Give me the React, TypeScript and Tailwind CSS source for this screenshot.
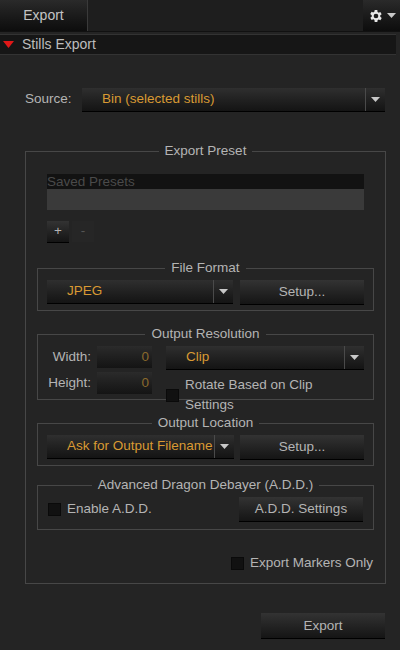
import React from 'react';

const font = { fontFamily: '"Liberation Sans", Arial, sans-serif' };

function Caret() {
  return (
    <svg width="9" height="5" viewBox="0 0 9 5">
      <path d="M0 0h9L4.5 5z" fill="#c8c8c8" />
    </svg>
  );
}

function Dropdown({ value, w, pad = 'pl-[20px]' }: { value: string; w: string; pad?: string }) {
  return (
    <div className={`flex h-[23px] ${w} bg-gradient-to-b from-[#2f2f2f] to-[#141414] shadow-[0_1px_0_#000]`}>
      <div className={`flex flex-1 items-center ${pad} text-[13.5px] text-[#d99a33] overflow-hidden whitespace-nowrap`}>{value}</div>
      <div className="flex w-[20px] items-center justify-center border-l border-[#4a4a4a]">
        <Caret />
      </div>
    </div>
  );
}

function Button({ label, w, h = 'h-[24px]' }: { label: string; w: string; h?: string }) {
  return (
    <div className={`flex ${h} ${w} items-center justify-center bg-gradient-to-b from-[#333] to-[#151515] text-[13.5px] text-[#b4b4b4] shadow-[0_1px_0_#000]`}>
      {label}
    </div>
  );
}

function Box() {
  return <div className="h-[13px] w-[13px] bg-[#111] border border-[#0a0a0a]" />;
}

function Group({ title, className, children }: { title: string; className?: string; children: React.ReactNode }) {
  return (
    <fieldset className={`border border-[#474747] ${className ?? ''}`}>
      <legend className="mx-auto px-[6px] text-[13.5px] leading-[14px] text-[#b4b4b4]">{title}</legend>
      {children}
    </fieldset>
  );
}

export default function App() {
  return (
    <div style={font} className="h-[650px] w-[400px] bg-[#242424] text-[#b4b4b4] text-[13.5px] overflow-hidden">
      {/* Top bar */}
      <div className="flex h-[32px] justify-between bg-[#1e1e1e] border-b border-[#111]">
        <div className="flex w-[88px] items-center justify-center bg-gradient-to-b from-[#2a2a2a] to-[#0d0d0d] border-r border-[#3a3a3a] text-[14px] text-[#c4c4c4]">
          Export
        </div>
        <div className="flex w-[37px] items-center justify-center gap-[3px] bg-gradient-to-b from-[#2a2a2a] to-[#0d0d0d]">
          <svg width="16" height="16" viewBox="0 0 24 24" fill="#e6e6e6">
            <path d="M19.4 13a7.5 7.5 0 000-2l2.1-1.6-2-3.4-2.5 1a7.4 7.4 0 00-1.7-1L15 3h-4l-.4 2.7a7.4 7.4 0 00-1.7 1l-2.5-1-2 3.4L6.6 11a7.5 7.5 0 000 2l-2.1 1.6 2 3.4 2.5-1a7.4 7.4 0 001.7 1L11 21h4l.4-2.7a7.4 7.4 0 001.7-1l2.5 1 2-3.4zM13 15.5a3.5 3.5 0 110-7 3.5 3.5 0 010 7z" transform="translate(-1 0)" />
          </svg>
          <Caret />
        </div>
      </div>
      {/* Section header */}
      <div className="mt-[2px] flex h-[21px] items-center gap-[8px] bg-[#161616] border-y border-[#333] pl-[3px] mr-[4px]">
        <svg width="11" height="7" viewBox="0 0 11 7">
          <path d="M0 0h11L5.5 7z" fill="#e01818" />
        </svg>
        <span className="text-[14px] text-[#bdbdbd]">Stills Export</span>
      </div>

      <div className="pl-[25px] pr-[15px]">
        {/* Source */}
        <div className="mt-[33px] flex items-center">
          <span className="w-[57px]">Source:</span>
          <Dropdown value="Bin (selected stills)" w="flex-1" />
        </div>

        <Group title="Export Preset" className="mt-[33px] px-[11px] pb-[10px]">
          <div className="mx-[10px] mt-[16px]">
            <div className="h-[15px] bg-[#121212] leading-[15px] text-[#4a4a4a]">Saved Presets</div>
            <div className="h-[21px] bg-[#3a3a3a]" />
            <div className="mt-[11px] flex gap-[3px]">
              <Button label="+" w="w-[22px]" h="h-[21px]" />
              <div className="flex h-[21px] w-[22px] items-center justify-center bg-[#262626] text-[#555]">-</div>
            </div>
          </div>

          <Group title="File Format" className="mt-[19px] h-[50px] px-[9px]">
            <div className="mt-[5px] flex gap-[7px]">
              <Dropdown value="JPEG" w="w-[186px]" />
              <Button label="Setup..." w="w-[124px]" />
            </div>
          </Group>

          <Group title="Output Resolution" className="mt-[16px] h-[73px] px-[9px]">
            <div className="mt-[5px] flex gap-[14px]">
              <div className="flex flex-col gap-[4px]">
                {['Width:', 'Height:'].map((l) => (
                  <div key={l} className="flex items-center gap-[6px]">
                    <span className="w-[44px] text-right">{l}</span>
                    <div className="flex h-[22px] w-[55px] items-center justify-end pr-[3px] bg-gradient-to-b from-[#2b2b2b] to-[#141414] text-[#8a6a2c]">0</div>
                  </div>
                ))}
              </div>
              <div className="flex flex-1 flex-col gap-[6px]">
                <Dropdown value="Clip" w="w-full" />
                <div className="flex items-center gap-[6px]">
                  <Box />
                  <span>Rotate Based on Clip Settings</span>
                </div>
              </div>
            </div>
          </Group>

          <Group title="Output Location" className="mt-[16px] h-[50px] px-[9px]">
            <div className="mt-[5px] flex gap-[6px]">
              <Dropdown value="Ask for Output Filename" w="w-[187px]" />
              <Button label="Setup..." w="w-[124px]" />
            </div>
          </Group>

          <Group title="Advanced Dragon Debayer (A.D.D.)" className="mt-[12px] h-[52px] px-[10px]">
            <div className="mt-[5px] flex items-center justify-between">
              <div className="flex items-center gap-[6px]">
                <Box />
                <span>Enable A.D.D.</span>
              </div>
              <Button label="A.D.D. Settings" w="w-[124px]" />
            </div>
          </Group>

          <div className="mt-[23px] flex items-center justify-end gap-[6px] pr-[1px]">
            <Box />
            <span>Export Markers Only</span>
          </div>
        </Group>

        <div className="mt-[29px] flex justify-end">
          <Button label="Export" w="w-[124px]" h="h-[25px]" />
        </div>
      </div>
    </div>
  );
}
